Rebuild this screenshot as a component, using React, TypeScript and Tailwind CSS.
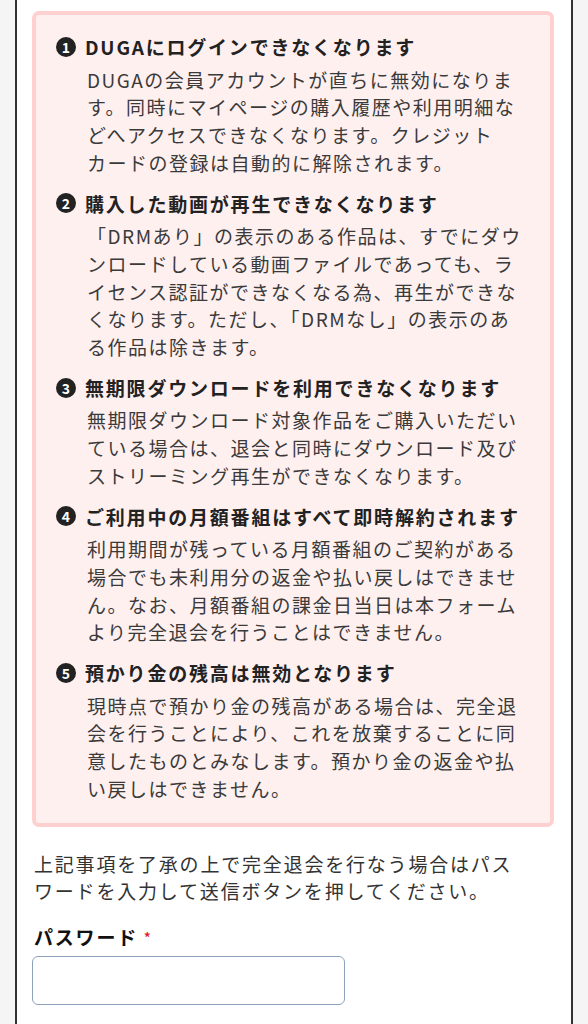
const notices = [
  {
    no: "1",
    title: "DUGAにログインできなくなります",
    lines: [
      "DUGAの会員アカウントが直ちに無効になりま",
      "す。同時にマイページの購入履歴や利用明細な",
      "どへアクセスできなくなります。クレジット",
      "カードの登録は自動的に解除されます。",
    ],
  },
  {
    no: "2",
    title: "購入した動画が再生できなくなります",
    lines: [
      "「DRMあり」の表示のある作品は、すでにダウ",
      "ンロードしている動画ファイルであっても、ラ",
      "イセンス認証ができなくなる為、再生ができな",
      "くなります。ただし、「DRMなし」の表示のあ",
      "る作品は除きます。",
    ],
  },
  {
    no: "3",
    title: "無期限ダウンロードを利用できなくなります",
    lines: [
      "無期限ダウンロード対象作品をご購入いただい",
      "ている場合は、退会と同時にダウンロード及び",
      "ストリーミング再生ができなくなります。",
    ],
  },
  {
    no: "4",
    title: "ご利用中の月額番組はすべて即時解約されます",
    lines: [
      "利用期間が残っている月額番組のご契約がある",
      "場合でも未利用分の返金や払い戻しはできませ",
      "ん。なお、月額番組の課金日当日は本フォーム",
      "より完全退会を行うことはできません。",
    ],
  },
  {
    no: "5",
    title: "預かり金の残高は無効となります",
    lines: [
      "現時点で預かり金の残高がある場合は、完全退",
      "会を行うことにより、これを放棄することに同",
      "意したものとみなします。預かり金の返金や払",
      "い戻しはできません。",
    ],
  },
];

function NumberBadge({ no }: { no: string }) {
  return (
    <span className="flex h-[20px] w-[20px] shrink-0 items-center justify-center rounded-full bg-[#222] text-[14px] font-bold leading-none tracking-normal text-white">
      {no}
    </span>
  );
}

export default function App() {
  return (
    <div
      className="flex min-h-screen justify-center bg-[#f5f5f5] text-[#333]"
      style={{ fontFamily: '"Noto Sans CJK JP", "Noto Sans", sans-serif' }}
    >
      <div className="w-[558px] border-x-2 border-[#333] bg-white pb-10 pl-[15px] pr-[17px] pt-[11px]">
        {/* warning box */}
        <div className="rounded-[7px] border-4 border-[#ffd0d0] bg-[#fff0f0] pb-[20px] pl-[20px] pr-2 pt-[18px]">
          <div className="flex flex-col gap-[13px]">
            {notices.map((n) => (
              <div key={n.no}>
                <div className="flex items-center gap-[9px] text-[19px] font-bold leading-[27.7px] tracking-[1.8px] text-[#222]">
                  <NumberBadge no={n.no} />
                  <span className="whitespace-nowrap">{n.title}</span>
                </div>
                <p className="mt-[5px] whitespace-nowrap pl-[31px] text-[19px] leading-[27.7px] tracking-[1.5px] text-[#3a3a3a]">
                  {n.lines.map((l, i) => (
                    <span key={i} className="block">
                      {l}
                    </span>
                  ))}
                </p>
              </div>
            ))}
          </div>
        </div>

        <p className="mt-[23px] whitespace-nowrap pl-[2px] text-[19px] leading-[27px] tracking-[1.8px] text-[#333]">
          上記事項を了承の上で完全退会を行なう場合はパス
          <br />
          ワードを入力して送信ボタンを押してください。
        </p>

        <div className="mt-[19px] flex items-center pl-[2px] text-[19px] font-bold leading-[28px] tracking-[1.8px] text-[#111]">
          パスワード
          <span className="ml-[6px] text-[13px] font-bold text-[#e0232e]">*</span>
        </div>
        <input
          type="password"
          className="mt-[5px] block h-[49px] w-[313px] rounded-[6px] border-[1.5px] border-[#8ea2bd] bg-white px-3 text-[18px] outline-none"
        />
      </div>
    </div>
  );
}
